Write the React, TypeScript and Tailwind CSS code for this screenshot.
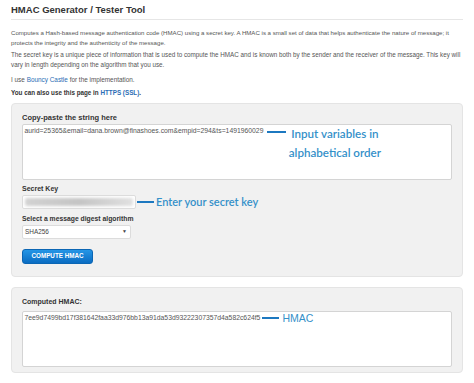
import React from "react";

export default function App() {
  return (
    <div className="w-[474px] h-[383px] bg-white overflow-hidden px-[11px] font-['Liberation_Sans',Arial,sans-serif] text-[#444]">
      <h1 className="pt-[4px] pb-[3px] text-[9.5px] leading-[12px] font-bold text-[#333] border-b border-[#e6e6e6]">
        HMAC Generator / Tester Tool
      </h1>
      <p className="mt-[8px] text-[6.1px] leading-[10px] text-[#555]">
        Computes a Hash-based message authentication code (HMAC) using a secret key. A HMAC is a small set of data that helps authenticate the nature of message; it protects the integrity and the authenticity of the message.
      </p>
      <p className="mt-[2px] text-[6.3px] leading-[10px] text-[#555]">
        The secret key is a unique piece of information that is used to compute the HMAC and is known both by the sender and the receiver of the message. This key will vary in length depending on the algorithm that you use.
      </p>
      <p className="mt-[5px] text-[6.4px] leading-[10px] text-[#555]">
        I use <span className="text-[#2a6db5]">Bouncy Castle</span> for the implementation.
      </p>
      <p className="mt-[3px] text-[6.3px] leading-[10px] font-bold text-[#333]">
        You can also use this page in <span className="text-[#2a6db5]">HTTPS (SSL)</span>.
      </p>

      <div className="mt-[5px] h-[174px] rounded-[4px] bg-[#f1f1f1] border border-[#e4e4e4] px-[10px] pt-[8.5px] flex flex-col items-start">
        <div className="text-[7.5px] leading-[10px] font-bold text-[#333]">Copy-paste the string here</div>
        <div className="mt-[1.5px] w-full h-[56px] bg-white border border-[#d4d4d4] rounded-[2px] px-[1.5px] pt-[1px] flex items-start">
          <span className="text-[6.8px] leading-[10px] text-[#555] whitespace-nowrap">
            aurid=25365&amp;email=dana.brown@finashoes.com&amp;empid=294&amp;ts=1491960029
          </span>
          <div className="ml-[4px] mt-[5px] w-[19px] h-[2px] bg-[#1c78c0] shrink-0" />
          <div className="ml-[1px] mt-[-2px] w-[95px] text-center font-['Lato',sans-serif] font-semibold text-[11.6px] leading-[19px] text-[#3490c9]">
            Input variables in
            <br />
            alphabetical order
          </div>
        </div>

        <div className="mt-[4px] text-[7px] leading-[10px] font-bold text-[#333]">Secret Key</div>
        <div className="mt-[1px] flex items-center">
          <div className="w-[114px] h-[14px] bg-white border border-[#dcdcdc] rounded-[2px] flex items-center px-[2px]">
            <div className="h-[8px] w-full rounded-[2px] bg-gradient-to-r from-[#d2d2d2] via-[#c4c4c4] to-[#e0e0e0] blur-[1.5px]" />
          </div>
          <div className="ml-[1px] w-[17px] h-[2px] bg-[#1c78c0]" />
          <div className="ml-[2px] whitespace-nowrap font-['Lato',sans-serif] font-semibold text-[11px] leading-[14px] text-[#3490c9]">
            Enter your secret key
          </div>
        </div>

        <div className="mt-[4.5px] text-[6.8px] leading-[10px] font-bold text-[#333]">Select a message digest algorithm</div>
        <div className="mt-[1px] w-[109px] h-[14px] bg-white border border-[#dcdcdc] rounded-[2px] flex items-center justify-between px-[2px] text-[6.4px] text-[#444]">
          <span>SHA256</span>
          <span className="text-[5px] mr-[1px]">▼</span>
        </div>

        <div className="mt-[10px] w-[71px] h-[15px] rounded-[3px] bg-gradient-to-b from-[#2596e6] to-[#0a6cc2] border border-[#0b66b4] flex items-center justify-center text-[6.3px] font-bold text-white">
          COMPUTE HMAC
        </div>
      </div>

      <div className="mt-[10px] h-[86px] rounded-[4px] bg-[#f1f1f1] border border-[#e4e4e4] px-[10px] pt-[9px]">
        <div className="text-[7px] leading-[10px] font-bold text-[#333]">Computed HMAC:</div>
        <div className="mt-[4px] h-[56px] bg-white border border-[#d4d4d4] rounded-[2px] px-[1.5px] pt-[1px] flex items-start">
          <span className="text-[6.8px] leading-[10px] text-[#555] whitespace-nowrap">
            7ee9d7499bd17f381642faa33d976bb13a91da53d93222307357d4a582c624f5
          </span>
          <div className="ml-[2px] mt-[4px] w-[17px] h-[2px] bg-[#1c78c0] shrink-0" />
          <div className="ml-[3px] mt-[-1px] text-[10.5px] leading-[12px] text-[#3490c9]">HMAC</div>
        </div>
      </div>
    </div>
  );
}
